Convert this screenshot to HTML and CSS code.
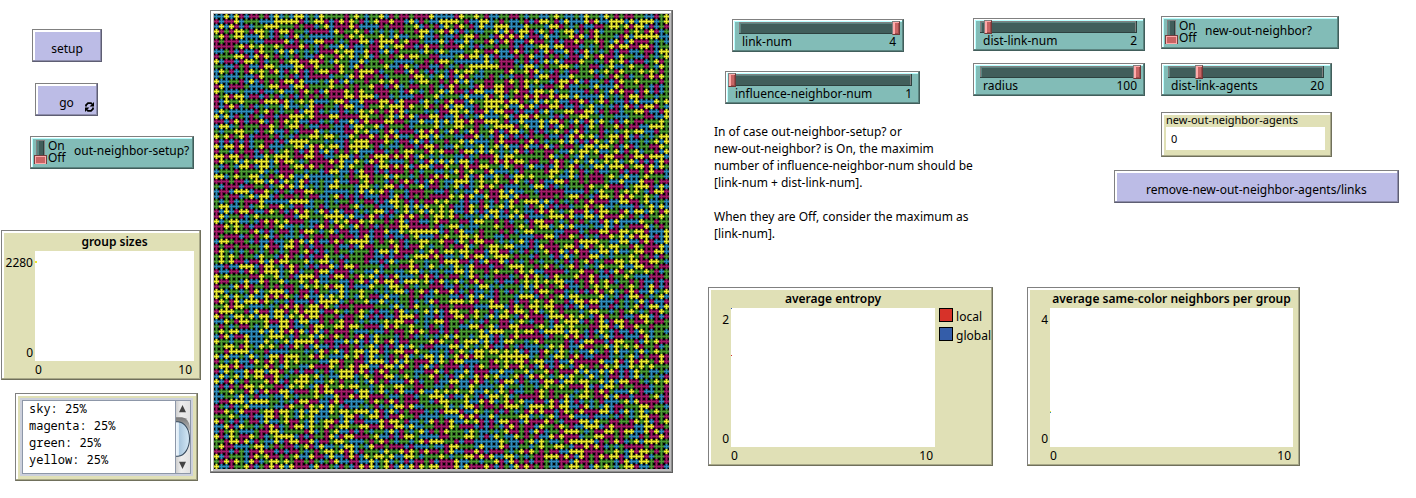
FILE: index.html
```html
<!DOCTYPE html>
<html lang="en">
<head>
<meta charset="utf-8">
<title>Opinion groups model</title>
<link rel="stylesheet" href="styles.css">
</head>
<body>
<main class="interface">
  <section class="side">
    <div class="commands">
      <button class="cmd cmd-setup" type="button">setup</button>
      <button class="cmd cmd-go" type="button">go
        <svg class="forever" viewBox="0 0 9 10" aria-hidden="true"><path d="M1 4.4V3.2L3 1.2H6L7 2.2M8 5.6V6.8L6 8.8H3L2 7.800" fill="none" stroke="#000" stroke-width="1.8"/><path d="M9 0V4.400H4.600ZM0 10V5.600H4.400Z"/></svg>
      </button>
      <label class="switch"><input type="checkbox"><span class="states"><span>On</span><span>Off</span></span><span class="switch-name">out-neighbor-setup?</span></label>
    </div>
    <figure class="plot plot-small">
      <figcaption class="plot-title">group sizes</figcaption>
      <div class="y-axis"><span>2280</span><span>0</span></div>
      <svg class="plot-area" aria-hidden="true"><rect y="10" width="2" height="2" fill="#ede62f"/></svg>
      <div class="x-axis"><span>0</span><span>10</span></div>
    </figure>
    <div class="output">
      <div class="output-view">
        <pre class="output-text">sky: 25%
magenta: 25%
green: 25%
yellow: 25%</pre>
        <svg class="scroll" viewBox="0 0 15 73" preserveAspectRatio="none" aria-hidden="true">
          <defs>
            <linearGradient id="rail"><stop offset="0" stop-color="#c8c8c8"/><stop offset=".4" stop-color="#eeeeee"/><stop offset="1" stop-color="#e2e2e2"/></linearGradient>
            <linearGradient id="knob"><stop offset="0" stop-color="#f6fbff"/><stop offset=".25" stop-color="#dceaf5"/><stop offset=".3" stop-color="#a9c6dd"/><stop offset="1" stop-color="#d5e9f6"/></linearGradient>
            <linearGradient id="shade" x2="0" y2="1"><stop offset="0" stop-color="#777"/><stop offset="1" stop-color="#bbb"/></linearGradient>
          </defs>
          <rect width="15" height="73" fill="url(#rail)"/>
          <path d="M0 17H7Q14 18 15 27V30H0Z" fill="url(#shade)"/>
          <path d="M0 21.500H3C10 22 14.500 29 14.500 38S10 55 3 55.500H0Z" fill="url(#knob)" stroke="#34475a"/>
          <path d="M7.500 5L11 12H4ZM7.500 68L11 61H4Z" fill="#444"/>
          <path d="M.5 0V73" stroke="#8d97a8"/>
        </svg>
      </div>
    </div>
  </section>

  <section class="world"><canvas id="view" width="455" height="455" aria-label="world view"></canvas></section>

  <section class="panel">
    <div class="controls">
      <div class="link-controls">
        <div class="slider slider-link"><input id="link" type="range" min="1" max="4" value="4"><label for="link">link-num</label><output for="link">4</output></div>
        <div class="slider slider-influence"><input id="influence" type="range" min="1" max="8" value="1"><label for="influence">influence-neighbor-num</label><output for="influence">1</output></div>
        <div class="note">
          <p>In of case out-neighbor-setup? or<br>new-out-neighbor? is On, the maximim<br>number of influence-neighbor-num should be<br>[link-num + dist-link-num].</p>
          <p>When they are Off, consider the maximum as<br>[link-num].</p>
        </div>
      </div>
      <div class="distant">
        <div class="distant-columns">
          <div class="distance">
            <div class="slider"><input id="dist" type="range" min="0" max="40" value="2"><label for="dist">dist-link-num</label><output for="dist">2</output></div>
            <div class="slider"><input id="radius" type="range" min="0" max="100" value="100"><label for="radius">radius</label><output for="radius">100</output></div>
          </div>
          <div class="agents">
            <label class="switch"><input type="checkbox"><span class="states"><span>On</span><span>Off</span></span><span class="switch-name">new-out-neighbor?</span></label>
            <div class="slider"><input id="agents" type="range" min="0" max="100" value="20"><label for="agents">dist-link-agents</label><output for="agents">20</output></div>
            <div class="monitor"><span class="monitor-name">new-out-neighbor-agents</span><output class="monitor-value">0</output></div>
          </div>
        </div>
        <button class="cmd cmd-remove" type="button">remove-new-out-neighbor-agents/links</button>
      </div>
    </div>
    <div class="plots">
      <figure class="plot plot-entropy">
        <figcaption class="plot-title">average entropy</figcaption>
        <div class="y-axis"><span>2</span><span>0</span></div>
        <svg class="plot-area" aria-hidden="true"><rect width="1" height="1" fill="#345da9"/><rect y="47" width="1" height="1" fill="#d73229"/></svg>
        <div class="x-axis"><span>0</span><span>10</span></div>
        <ul class="legend"><li><i class="swatch local"></i>local</li><li><i class="swatch global"></i>global</li></ul>
      </figure>
      <figure class="plot plot-neighbors">
        <figcaption class="plot-title">average same-color neighbors per group</figcaption>
        <div class="y-axis"><span>4</span><span>0</span></div>
        <svg class="plot-area" aria-hidden="true"><rect y="103" width="1" height="1" fill="#ede62f"/><rect y="104" width="1" height="1" fill="#2d8dbe"/></svg>
        <div class="x-axis"><span>0</span><span>10</span></div>
      </figure>
    </div>
  </section>
</main>
<script src="world.js"></script>
</body>
</html>
```
FILE: styles.css
```css
* { box-sizing: border-box; }

body {
  margin: 0;
  background: #fff;
  color: #000;
  font: 12px/17px "Noto Sans", sans-serif;
}

button, input, output { font: inherit; color: inherit; }
figure, p, pre, ul { margin: 0; padding: 0; }

.interface {
  display: flex;
  align-items: flex-start;
  padding: 10px 17px 10px 1px;
}

/* Left column */
.side { flex: 200 1 0; min-width: 180px; }

.commands {
  display: flex;
  flex-direction: column;
  align-items: flex-start;
  gap: 20px;
  padding: 19px 0 61px 29px;
}

.cmd {
  position: relative;
  height: 33px;
  padding: 5px 0 0;
  background: #bcbce6;
  border: 1px solid;
  border-color: #808080 #5e5e73 #5e5e73 #808080;
  box-shadow: inset -1px -1px #8d8dac, inset 2px 2px #fff;
}
.cmd-setup { width: 70px; margin-left: 2px; }
.cmd-go { width: 63px; margin: 1px 0 0 5px; }
.forever { position: absolute; right: 3px; bottom: 3px; width: 9px; height: 10px; }

.switch {
  display: flex;
  height: 33px;
  width: 164px;
  padding: 3px;
  background: #82bcb7;
  border: 1px solid;
  border-color: #808080 #415e5b #415e5b #808080;
  box-shadow: inset -1px -1px #5b8480, inset 1px 1px #fff, inset 2px 2px #b9ffff;
}
.switch input {
  appearance: none;
  width: 13px;
  height: 25px;
  margin: 0 1px 0 0;
  background:
    linear-gradient(#c86464, #c86464) 2px 17px / 9px 6px no-repeat,
    linear-gradient(#ffaaaa, #ffaaaa) 1px 16px / 11px 8px no-repeat,
    linear-gradient(#704040, #704040) 0 15px / 13px 9px no-repeat,
    linear-gradient(90deg, #5b8480 2px, #415e5b 2px 6px, #2d413f 6px) 3px 1px / 7px 15px no-repeat,
    linear-gradient(#808080, #808080) 2px 0 / 9px 16px no-repeat;
}
.switch input:checked { transform: scaleY(-1); }
.states { display: flex; flex-direction: column; line-height: 12px; width: 26px; }
.switch-name { padding-top: 2px; }

/* World */
.world {
  flex: 455 1 0;
  margin: 0 35px 0 9px;
  padding: 3px;
  background: #bdbcbd;
  border: 1px solid;
  border-color: #808080 #5e5e5e #5e5e5e #808080;
  box-shadow: inset -1px -1px #8d8d8d, inset 2px 2px #fff;
}
.world canvas { display: block; width: 100%; image-rendering: pixelated; }

/* Sliders */
.panel { flex: 691 1 0; }
.controls { display: flex; min-height: 277px; }
.link-controls { flex: 265 1 0; padding-top: 9px; }
.slider {
  display: grid;
  grid-template-columns: 1fr auto;
  align-content: start;
  height: 33px;
  padding: 1px 3px 0 2px;
  background: #82bcb7;
  border: 1px solid;
  border-color: #808080 #415e5b #415e5b #808080;
  box-shadow: inset -1px -1px #5b8480, inset 1px 1px #fff, inset 2px 2px #b9ffff;
}
.slider input {
  appearance: none;
  grid-column: 1 / -1;
  width: 100%;
  height: 14px;
  margin: 0;
  background:
    linear-gradient(#415e5b, #415e5b) 6px 3px / calc(100% - 12px) 9px no-repeat,
    linear-gradient(#5b8480, #5b8480) 5px 2px / calc(100% - 11px) 10px no-repeat,
    linear-gradient(#808080, #808080) 4px 1px / calc(100% - 9px) 11px no-repeat,
    linear-gradient(#2d413f, #2d413f) 4px 1px / calc(100% - 8px) 12px no-repeat;
}
.slider input::-webkit-slider-thumb {
  appearance: none;
  width: 8px;
  height: 14px;
  background: #c86464;
  border: 1px solid;
  border-color: #808080 #703838 #703838 #808080;
  box-shadow: inset 2px 1px #ffaaaa, inset -1px -1px #a04c4c;
}
.slider label { padding-left: 7px; line-height: 14px; }
.slider output { padding-right: 4px; line-height: 14px; }
.slider-link { width: 172px; margin-left: 24px; }
.slider-influence { width: 195px; margin: 19px 0 19px 17px; }

.note { padding-left: 6px; white-space: nowrap; }
.note p + p { margin-top: 17px; }

.distant { flex: 426 1 0; display: flex; flex-direction: column; align-items: flex-end; }
.distant-columns { display: flex; width: 100%; gap: 16px; padding: 6px 60px 13px 0; }
.distance { flex: 172 1 0; display: flex; flex-direction: column; gap: 12px; padding-top: 2px; }
.agents { flex: 178 1 0; display: flex; flex-direction: column; gap: 14px; }
.agents .switch { width: auto; }
.agents .slider, .monitor { margin-right: 7px; }
.cmd-remove { width: 67%; }

.monitor {
  height: 45px;
  margin-top: 2px;
  padding: 0 6px 5px 4px;
  background: #e0e0b6;
  border: 1px solid;
  border-color: #808080 #70705b #70705b #808080;
  box-shadow: inset -1px -1px #a8a888, inset 2px 2px #fff;
  font-size: 11px;
}
.monitor-name { display: block; line-height: 15px; margin-top: -1px; }
.monitor-value { display: block; padding: 3px 5px; line-height: 17px; background: #fff; }

/* Plots */
.plots { display: flex; gap: 34px; padding-right: 99px; }
.plot {
  display: grid;
  grid-template-columns: 22px 1fr auto;
  grid-template-rows: 20px 1fr 18px;
  height: 179px;
  padding-right: 6px;
  background: #e0e0b6;
  border: 1px solid;
  border-color: #808080 #70705b #70705b #808080;
  box-shadow: inset -1px -1px #a8a888, inset 2px 2px #fff;
}
.plot-small { grid-template-columns: 33px 1fr auto; height: 150px; }
.plot-entropy { flex: 282 1 0; padding-right: 1px; }
.plot-neighbors { flex: 265 1 0; }
.plot-title { grid-area: 1 / 2; text-align: center; line-height: 22px; font-weight: 600; white-space: nowrap; }
.y-axis {
  grid-area: 2 / 1;
  display: flex;
  flex-direction: column;
  justify-content: space-between;
  align-items: flex-end;
  padding: 3px 2px 0 0;
}
.plot-area { grid-area: 2 / 2; width: 100%; height: 100%; background: #fff; }
.x-axis { grid-area: 3 / 2; display: flex; justify-content: space-between; padding: 0 2px 0 0; }
.legend { grid-area: 2 / 3; list-style: none; padding-left: 4px; }
.legend li { display: flex; align-items: flex-start; gap: 3px; height: 19px; }
.swatch { width: 14px; height: 14px; border: 1px solid #000; }
.local { background: #d73229; }
.global { background: #345da9; }

/* Output area */
.output {
  margin: 13px 3px 0 14px;
  padding: 4px;
  background: #e0e0b6;
  border: 1px solid;
  border-color: #808080 #70705b #70705b #808080;
  box-shadow: inset -1px -1px #a8a888, inset 2px 2px #fff;
}
.output-view {
  display: flex;
  justify-content: space-between;
  height: 78px;
  border: 2px solid #ccd0dc;
  outline: 1px solid #8d97a8;
  outline-offset: -3px;
  background: #fff;
  padding: 0 1px;
}
.output-text { padding-left: 6px; font: 12px/17px "Noto Sans Mono", "DejaVu Sans Mono", monospace; }
.scroll { width: 15px; height: 74px; }
```
FILE: world.js
```js
const COLORS = {
  sky: [45, 141, 190],
  magenta: [167, 27, 106],
  green: [75, 157, 51],
  yellow: [237, 237, 49]
};
const CELL = 5;
const view = document.getElementById("view");
const ctx = view.getContext("2d");
const names = Object.keys(COLORS);
let seed = 2280;

function random() {
  seed = (seed * 1664525 + 1013904223) >>> 0;
  return seed / 4294967296;
}

ctx.fillStyle = "#000";
ctx.fillRect(0, 0, view.width, view.height);

for (let y = 0; y < view.height; y += CELL) {
  for (let x = 0; x < view.width; x += CELL) {
    const [r, g, b] = COLORS[names[Math.floor(random() * 4)]];
    ctx.fillStyle = `rgb(${r * 0.6}, ${g * 0.6}, ${b * 0.6})`;
    ctx.fillRect(x + 1, y, 3, 5);
    ctx.fillRect(x, y + 1, 5, 3);
    ctx.fillStyle = `rgb(${r}, ${g}, ${b})`;
    ctx.fillRect(x + 2, y, 1, 5);
    ctx.fillRect(x, y + 2, 5, 1);
  }
}
```
